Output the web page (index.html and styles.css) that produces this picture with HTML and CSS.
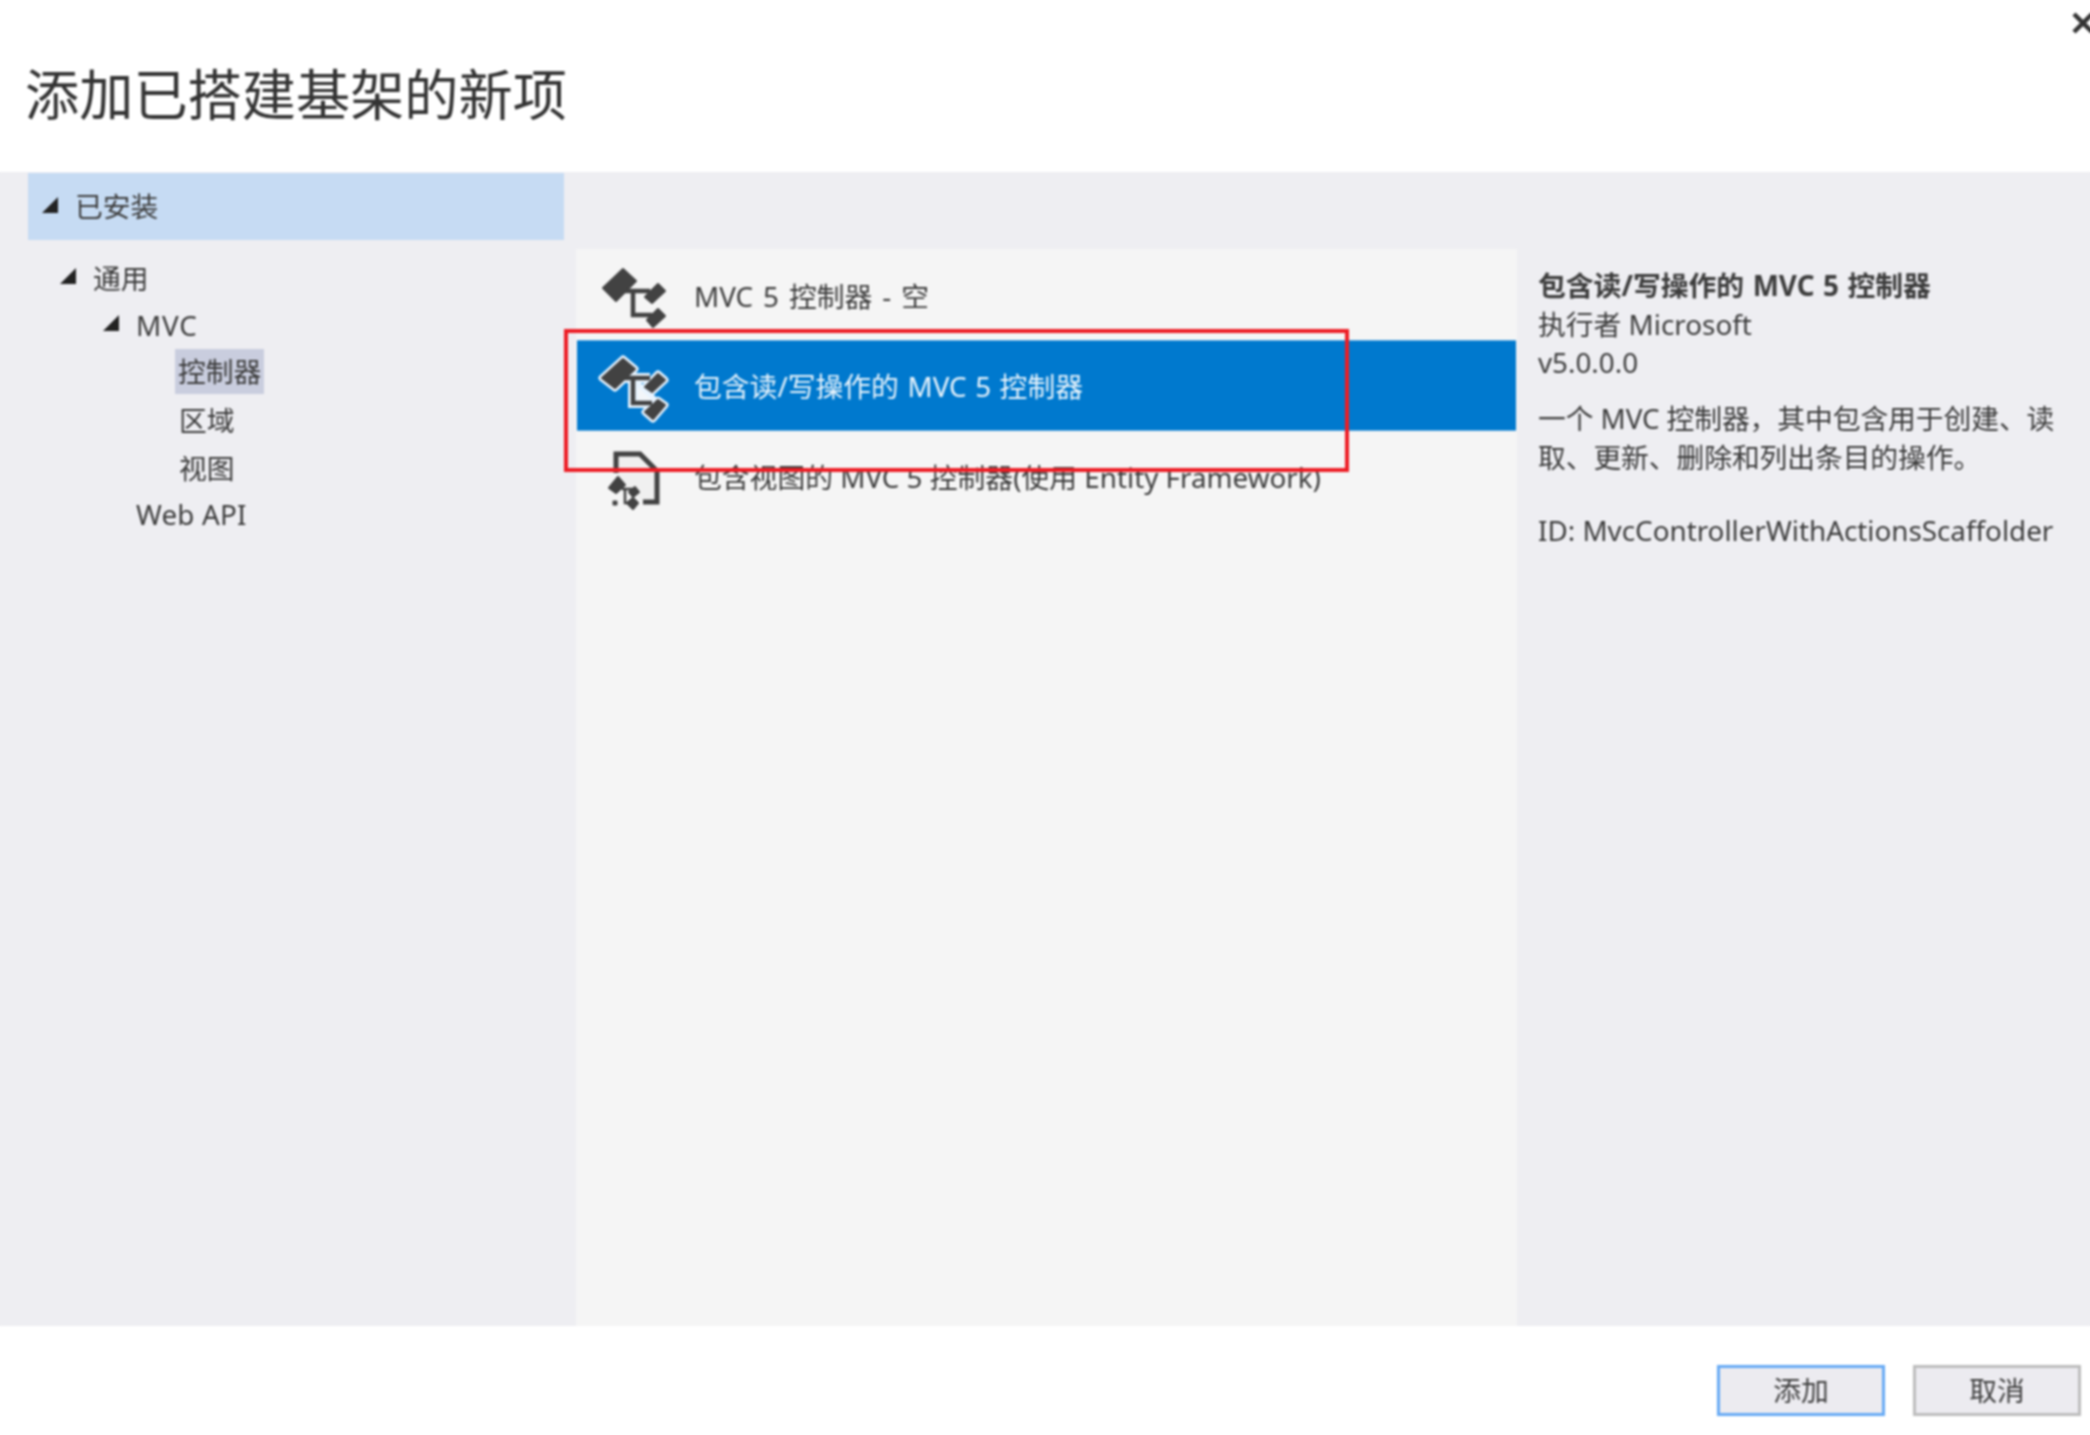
FILE: index.html
```html
<!DOCTYPE html>
<html lang="zh-CN">
<head>
<meta charset="utf-8">
<title>添加已搭建基架的新项</title>
<link rel="stylesheet" href="styles.css">
</head>
<body>
<div class="dialog">
  <header class="head">
    <h1 class="title">添加已搭建基架的新项</h1>
    <svg class="close" viewBox="0 0 24 24" width="24" height="24"><path d="M3 3 21 21M21 3 3 21"/></svg>
  </header>
  <main class="body">
    <nav class="side">
      <div class="installed"><span class="tri"></span>已安装</div>
      <ul class="tree">
        <li class="node l1"><span class="tri"></span>通用</li>
        <li class="node l2"><span class="tri"></span>MVC</li>
        <li class="node l3"><span class="sel">控制器</span></li>
        <li class="node l3"><span class="plain">区域</span></li>
        <li class="node l3"><span class="plain">视图</span></li>
        <li class="node l2b">Web API</li>
      </ul>
    </nav>
    <section class="list">
      <div class="row wide">
        <svg class="ico" viewBox="0 0 70 70" width="70" height="70">
          <path d="M3 28 23 9 36 21 16 41Z" class="shape"/>
          <path d="M65 31 58 24 45 37 52 43Z" class="shape"/>
          <path d="M65 56 58 49 47 60 53 67Z" class="shape"/>
          <path d="M25 31H50M33 31V55H52" class="wire"/>
        </svg>
        <span>MVC 5 控制器 - 空</span>
      </div>
      <div class="row active">
        <svg class="ico" viewBox="0 0 70 70" width="70" height="70">
          <path d="M25 27H50M33 27V52H52M38 36 52 49H38Z" class="wire-halo"/>
          <path d="M2 27 23 8 35 18 15 37Z" class="halo"/>
          <path d="M65 29 58 23 45 36 52 41Z" class="halo"/>
          <path d="M65 54 58 49 45 61 53 68Z" class="halo"/>
          <path d="M2 27 23 8 35 18 15 37Z" class="shape"/>
          <path d="M65 29 58 23 45 36 52 41Z" class="shape"/>
          <path d="M65 54 58 49 45 61 53 68Z" class="shape"/>
          <path d="M38 36 52 49H38Z" class="glow"/>
          <path d="M25 27H50M33 27V52H52" class="wire"/>
        </svg>
        <span>包含读/写操作的 MVC 5 控制器</span>
      </div>
      <div class="row">
        <svg class="ico" viewBox="0 0 70 70" width="70" height="70">
          <path d="M16 31V12H40L57 29V60H43" class="doc"/>
          <path d="M9 46 18 35 25 43 16 51Z" class="shape"/>
          <path d="M39 50 35 45 29 50 33 55Z" class="shape"/>
          <path d="M38 61 33 56 27 61 33 67Z" class="shape"/>
          <path d="M22 47H33M25 47V61H31" class="wire thin"/>
          <path d="M13.500 59.500h3v3h-3z" class="shape"/>
        </svg>
        <span>包含视图的 MVC 5 控制器(使用 Entity Framework)</span>
      </div>
    </section>
    <aside class="info">
      <div class="info-name">包含读/写操作的 MVC 5 控制器</div>
      <div>执行者 Microsoft</div>
      <div>v5.0.0.0</div>
      <p class="info-desc">一个 MVC 控制器，其中包含用于创建、读取、更新、删除和列出条目的操作。</p>
      <div class="info-id">ID: MvcControllerWithActionsScaffolder</div>
    </aside>
  </main>
  <footer class="foot">
    <button class="btn primary">添加</button>
    <button class="btn">取消</button>
  </footer>
  <div class="mark"></div>
</div>
</body>
</html>
```

FILE: styles.css
```css
* { box-sizing: border-box; }
html, body { margin: 0; height: 100%; background: #fff; overflow: hidden; }
.dialog {
  position: relative;
  width: 2090px;
  height: 1435px;
  display: flex;
  flex-direction: column;
  font-family: "Noto Sans", "Noto Sans CJK SC", sans-serif;
  font-size: 27.8px;
  color: #3c3c3c;
  filter: blur(0.9px);
}
.head { height: 172px; flex: none; position: relative; background: #fff; }
.title {
  margin: 0;
  padding: 58px 0 0 25px;
  font-size: 54.2px;
  line-height: 72px;
  font-weight: 400;
  color: #333;
}
.close { position: absolute; top: 11px; right: -5px; }
.close path { fill: none; stroke: #333; stroke-width: 4.5; }
.body {
  flex: 1;
  display: flex;
  background: #eeeef2;
  min-height: 0;
  box-shadow: -20px 0 0 #eeeef2, 20px 0 0 #eeeef2;
}
.side { width: 576px; flex: none; padding-left: 28px; }
.installed {
  width: 536px;
  height: 67px;
  margin-top: 1px;
  background: #c6dbf3;
  display: flex;
  align-items: center;
  padding-left: 15px;
  line-height: 1;
}
.tri {
  width: 0;
  height: 0;
  border-style: solid;
  border-width: 0 0 16px 16px;
  border-color: transparent transparent #222 transparent;
  margin: -3px 17px 0 -1px;
  flex: none;
}
.tree { list-style: none; margin: 13.500px 0 0; padding: 0; }
.node { height: 47.4px; display: flex; align-items: center; }
.l1 { padding-left: 33px; }
.l2 { padding-left: 76px; letter-spacing: 0.8px; }
.l3 { padding-left: 147px; }
.l2b { padding-left: 108px; letter-spacing: 0.2px; }
.sel { background: #c9cdde; padding: 5px 3px; line-height: 35px; }
.plain { padding-left: 4px; }
.list { width: 941px; flex: none; margin-top: 77px; background: #f5f5f5; }
.row {
  height: 91px;
  margin-left: 1px;
  margin-right: 1px;
  display: flex;
  align-items: center;
  padding-left: 23px;
  gap: 24px;
}
.row + .row span { margin-top: -2px; }
.wide { word-spacing: 2.7px; }
.ico { flex: none; overflow: visible; }
.shape { fill: #424242; stroke: #424242; stroke-width: 2; stroke-linejoin: round; }
.halo { fill: #e8f4ff; stroke: #e8f4ff; stroke-width: 7; stroke-linejoin: round; }
.glow { fill: #f2f6fa; }
.wire { fill: none; stroke: #424242; stroke-width: 4.5; }
.wire-halo { fill: #e8f4ff; stroke: #e8f4ff; stroke-width: 10; }
.thin { stroke-width: 2.5; }
.doc { fill: #f0f0f0; stroke: #424242; stroke-width: 5; }
.active { background: #0079ce; color: #e9f4fc; border-top: 1px solid #5aa8e0; border-bottom: 1px solid #5aa8e0; word-spacing: 1.3px; }
.info { flex: 1; padding: 94px 10px 0 21px; line-height: 38.7px; }
.info-name { font-weight: 700; word-spacing: 1.3px; }
.info-desc { margin: 17px 0 0; letter-spacing: -0.1px; }
.info-id { margin-top: 34px; white-space: nowrap; }
.foot { height: 109px; flex: none; display: flex; justify-content: flex-end; gap: 28px; padding: 39px 9px 0 0; background: #fff; }
.btn {
  width: 168px;
  height: 51px;
  background: #ecebf0;
  border: 3px solid #bdbdbd;
  font: inherit;
  color: #404040;
  padding: 0 0 3px;
}
.primary { border-color: #66aaf5; }
.mark {
  position: absolute;
  left: 564px;
  top: 329px;
  width: 785px;
  height: 143px;
  border: 4px solid #ed1c24;
}
```
